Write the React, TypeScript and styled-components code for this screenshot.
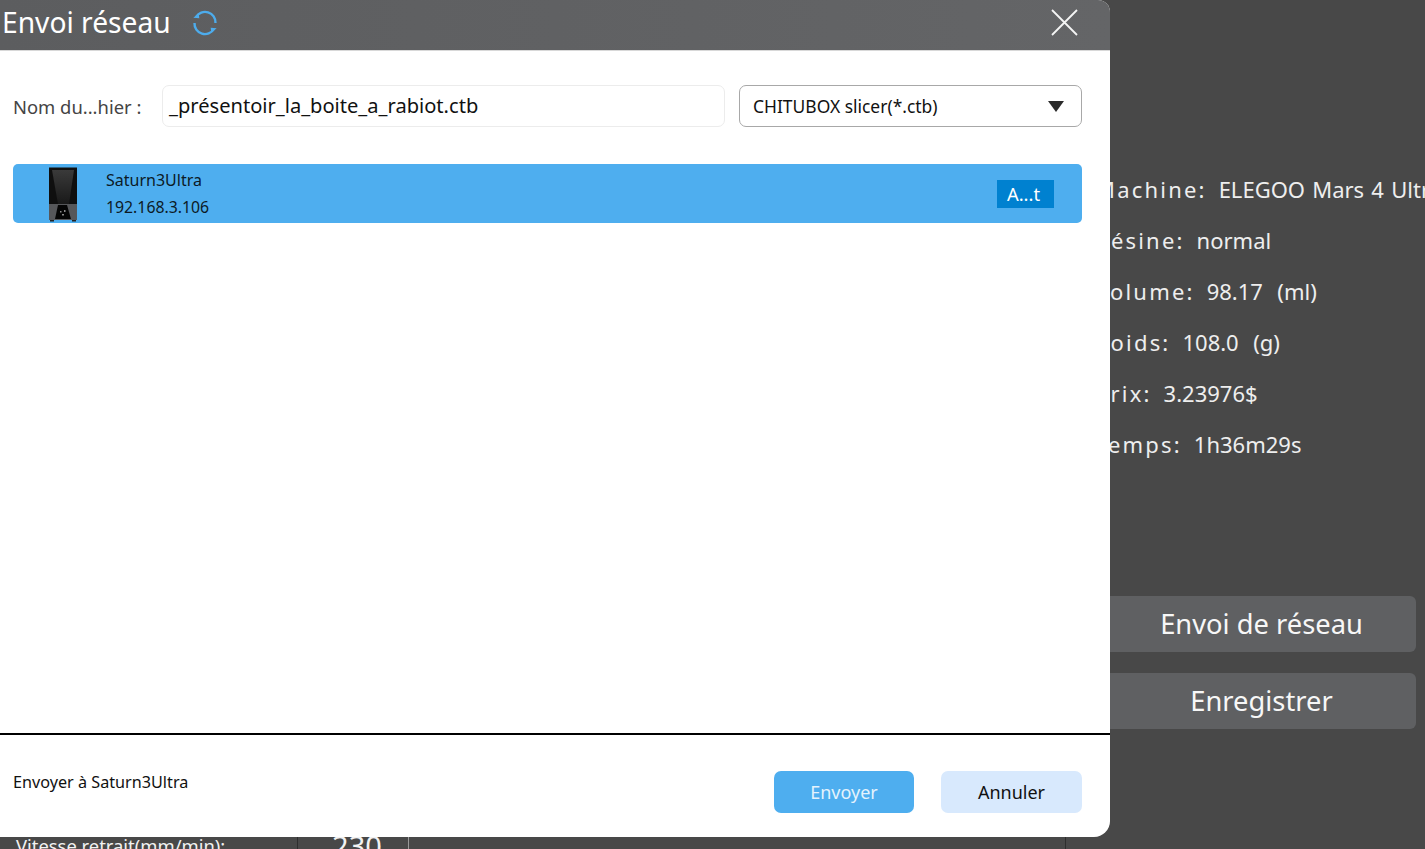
import React from "react";
import styled, { createGlobalStyle } from "styled-components";

const Global = createGlobalStyle`
  html, body { margin: 0; padding: 0; height: 100%; background: #484848; }
  * { box-sizing: border-box; }
`;

const FONT = `"Noto Sans", "Open Sans", "Liberation Sans", sans-serif`;

const Page = styled.div`
  position: relative;
  width: 1425px;
  height: 849px;
  overflow: hidden;
  background: #484848;
  font-family: ${FONT};
  display: flex;
`;

const Workspace = styled.div`
  width: 1090px;
  flex: none;
  padding-top: 831px;
`;

const ParamRow = styled.div`
  display: grid;
  grid-template-columns: 298px 111px 657px;
  height: 40px;
  color: #f2f2f2;
`;

const ParamCell = styled.div<{ $size?: number; $line?: string; $pad?: number; $center?: boolean }>`
  font-size: ${(p) => p.$size ?? 18.4}px;
  line-height: 30px;
  padding-left: ${(p) => p.$pad ?? 16}px;
  text-align: ${(p) => (p.$center ? "center" : "left")};
  border-right: 1px solid ${(p) => p.$line ?? "#2e2e2e"};
`;

const SidePanel = styled.aside`
  flex: 1;
  min-width: 0;
  padding: 176px 9px 0 1px;
  display: flex;
  flex-direction: column;
  white-space: nowrap;
`;

const Stats = styled.div`
  height: 420px;
  overflow: hidden;
  margin-right: -9px;
  padding-left: 4px;
`;

const Stat = styled.div`
  display: flex;
  gap: 12px;
  height: 51px;
  line-height: 27px;
  font-size: 22px;
  color: #eeeeee;
`;

const StatLabel = styled.span`
  letter-spacing: 2.2px;
`;

const StatValue = styled.span`
  white-space: pre;
  word-spacing: 1.5px;
`;

const PanelButton = styled.button`
  height: 56px;
  margin-bottom: 21px;
  border: 0;
  border-radius: 6px;
  background: #5f6062;
  color: #f7f7f7;
  font: 27.3px ${FONT};
  padding: 0 0 1px 16px;
`;

const Dialog = styled.section`
  position: absolute;
  left: 0;
  top: 0;
  width: 1110px;
  height: 837px;
  display: flex;
  flex-direction: column;
  background: #ffffff;
  border-radius: 0 12px 16px 0;
  overflow: hidden;
`;

const Header = styled.header`
  height: 51px;
  flex: none;
  display: flex;
  align-items: center;
  padding: 0 32px 5px 2px;
  background: linear-gradient(90deg, #5c5d5f, #646567);
  border-bottom: 1px solid #d8d8d8;
`;

const Title = styled.h1`
  margin: 0 20px 2px 0;
  font-size: 28.2px;
  font-weight: 400;
  color: #ffffff;
`;

const HeaderIcon = styled.svg`
  display: block;
  flex: none;
`;

const CloseButton = styled.button`
  margin-left: auto;
  padding: 0;
  border: 0;
  background: none;
  display: flex;
`;

const Body = styled.div`
  flex: 1;
  padding: 34px 28px 0 13px;
  display: flex;
  flex-direction: column;
  gap: 37px;
`;

const FileRow = styled.div`
  display: flex;
  align-items: center;
  height: 42px;
`;

const FileLabel = styled.label`
  width: 149px;
  flex: none;
  font-size: 18.4px;
  color: #444444;
`;

const FileInput = styled.div`
  width: 563px;
  height: 42px;
  flex: none;
  padding: 0 6px 1px;
  display: flex;
  align-items: center;
  border: 1px solid #ececec;
  border-radius: 7px;
  font-size: 20.1px;
  color: #111111;
`;

const FormatSelect = styled.div`
  width: 343px;
  height: 42px;
  margin-left: 14px;
  padding: 0 17px 0 13px;
  display: flex;
  align-items: center;
  justify-content: space-between;
  border: 1px solid #a8a8a8;
  border-radius: 7px;
  font-size: 17.45px;
  color: #111111;
`;

const Caret = styled.span`
  width: 0;
  height: 0;
  border-left: 8.5px solid transparent;
  border-right: 8.5px solid transparent;
  border-top: 11px solid #2b2b2b;
`;

const DeviceRow = styled.div`
  height: 59px;
  display: flex;
  align-items: center;
  padding: 0 28px 0 34px;
  border-radius: 5px;
  background: #4eaeef;
  color: #0c1a26;
`;

const DeviceInfo = styled.div`
  margin-left: 27px;
  display: flex;
  flex-direction: column;
  gap: 4px;
  font-size: 16px;
  line-height: 22px;
  margin-top: -1px;
`;

const DeviceAddress = styled.span`
  font-size: 15.8px;
  margin-top: 1px;
`;

const DeviceAction = styled.button`
  margin-left: auto;
  width: 57px;
  height: 28px;
  padding: 0 4px 0 0;
  border: 0;
  background: #0081d0;
  color: #ffffff;
  font: 18.4px ${FONT};
`;

const Footer = styled.footer`
  height: 104px;
  flex: none;
  display: flex;
  align-items: center;
  padding: 12px 28px 0 13px;
  border-top: 2px solid #000000;
`;

const FooterText = styled.span`
  font-size: 16.2px;
  color: #111111;
  margin: -21px auto 0 0;
`;

const FooterButton = styled.button<{ $primary?: boolean }>`
  width: ${(p) => (p.$primary ? 140 : 141)}px;
  height: 42px;
  margin-left: 27px;
  border: 0;
  border-radius: 7px;
  background: ${(p) => (p.$primary ? "#4eaeef" : "#d8e9fd")};
  color: ${(p) => (p.$primary ? "#e4f3fd" : "#111111")};
  font: 18px ${FONT};
`;

const stats: [string, string][] = [
  ["Machine:", "ELEGOO Mars 4 Ultra"],
  ["Résine:", "normal"],
  ["Volume:", "98.17  (ml)"],
  ["Poids:", "108.0  (g)"],
  ["Prix:", "3.23976$"],
  ["Temps:", "1h36m29s"],
];

const PrinterIcon = () => (
  <svg width="32" height="56" viewBox="0 0 32 56" style={{ flex: "none" }}>
    <defs>
      <linearGradient id="wedge" x1="0" y1="0" x2="0" y2="1">
        <stop offset="0" stopColor="#3a3a3a" />
        <stop offset="1" stopColor="#191919" />
      </linearGradient>
    </defs>
    <path d="M2 1.5h28v37H2z" fill="#0f0f0f" />
    <path d="M5 4h22l-5 34H11z" fill="url(#wedge)" />
    <path d="M2 38h28v16H2z" fill="#56575a" />
    <path d="M11 39h9l4 14H8z" fill="#050505" />
    <path d="M13 45h1.5v1.5H13zM17 44h1.5v2H17zM15 48h2v1.5h-2z" fill="#8a8a8a" />
    <path d="M3 54h4v1.5H3zM25 54h4v1.5h-4z" fill="#222" />
  </svg>
);

export default function App() {
  return (
    <Page>
      <Global />
      <Workspace>
        <ParamRow>
          <ParamCell>Vitesse retrait(mm/min):</ParamCell>
          <ParamCell $center $pad={8} $size={29} $line="#9a9a9a">230</ParamCell>
          <ParamCell />
        </ParamRow>
      </Workspace>
      <SidePanel>
        <Stats>
          {stats.map(([k, v]) => (
            <Stat key={k}>
              <StatLabel>{k}</StatLabel>
              <StatValue>{v}</StatValue>
            </Stat>
          ))}
        </Stats>
        <PanelButton>Envoi de réseau</PanelButton>
        <PanelButton>Enregistrer</PanelButton>
      </SidePanel>
      <Dialog>
        <Header>
          <Title>Envoi réseau</Title>
          <HeaderIcon width="28" height="28" viewBox="0 0 28 28" fill="none">
            <path d="M5 8A10.5 10.5 0 0 1 24.5 14" stroke="#4dacec" strokeWidth="2.4" />
            <path d="M23 20A10.5 10.5 0 0 1 3.5 14" stroke="#4dacec" strokeWidth="2.4" />
            <path d="M2.3 8.7L7.7 4.3L8.3 9.3zM25.7 19.3L20.3 23.7L19.7 18.7z" fill="#4dacec" />
          </HeaderIcon>
          <CloseButton aria-label="Fermer">
            <HeaderIcon width="27" height="27" viewBox="0 0 27 27" fill="none">
              <path d="M1 1l25 25M26 1L1 26" stroke="#f5f5f5" strokeWidth="1.8" />
            </HeaderIcon>
          </CloseButton>
        </Header>
        <Body>
          <FileRow>
            <FileLabel>Nom du...hier :</FileLabel>
            <FileInput>_présentoir_la_boite_a_rabiot.ctb</FileInput>
            <FormatSelect>
              CHITUBOX slicer(*.ctb)
              <Caret />
            </FormatSelect>
          </FileRow>
          <DeviceRow>
            <PrinterIcon />
            <DeviceInfo>
              <span>Saturn3Ultra</span>
              <DeviceAddress>192.168.3.106</DeviceAddress>
            </DeviceInfo>
            <DeviceAction>A...t</DeviceAction>
          </DeviceRow>
        </Body>
        <Footer>
          <FooterText>Envoyer à Saturn3Ultra</FooterText>
          <FooterButton $primary>Envoyer</FooterButton>
          <FooterButton>Annuler</FooterButton>
        </Footer>
      </Dialog>
    </Page>
  );
}
